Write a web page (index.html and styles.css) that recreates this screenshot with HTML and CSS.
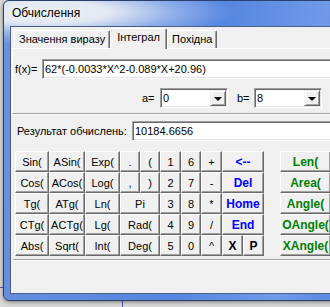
FILE: index.html
```html
<!DOCTYPE html>
<html lang="uk">
<head>
    <meta charset="UTF-8">
    <title>Обчислення</title>
    <link rel="stylesheet" href="styles.css">
</head>
<body>
    <div class="window">
        <div class="titlebar">Обчислення</div>
        <div class="client">
            <div class="tabs">
                <div class="tab">Значення виразу</div>
                <div class="tab active">Інтеграл</div>
                <div class="tab">Похідна</div>
            </div>
            <div class="panel">
                <div class="row fx-row">
                    <label class="fx-label">f(x)=</label>
                    <div class="edit">62*(-0.0033*X^2-0.089*X+20.96)</div>
                </div>
                <div class="row limits">
                    <label class="lim-label">a=</label>
                    <div class="combo"><span class="val">0</span><span class="drop"></span></div>
                    <label class="lim-label b">b=</label>
                    <div class="combo"><span class="val">8</span><span class="drop"></span></div>
                </div>
            </div>

            <div class="row result-row">
                <label class="res-label">Результат обчислень:</label>
                <div class="edit">10184.6656</div>
            </div>

            <div class="keypad">
                <div class="keys">
                    <button class="key">Sin(</button>
                    <button class="key">ASin(</button>
                    <button class="key">Exp(</button>
                    <button class="key">.</button>
                    <button class="key">(</button>
                    <button class="key">1</button>
                    <button class="key">6</button>
                    <button class="key">+</button>
                    <button class="key cmd wide">&lt;--</button>

                    <button class="key">Cos(</button>
                    <button class="key">ACos(</button>
                    <button class="key">Log(</button>
                    <button class="key">,</button>
                    <button class="key">)</button>
                    <button class="key">2</button>
                    <button class="key">7</button>
                    <button class="key">-</button>
                    <button class="key cmd wide">Del</button>

                    <button class="key">Tg(</button>
                    <button class="key">ATg(</button>
                    <button class="key">Ln(</button>
                    <button class="key wide">Pi</button>
                    <button class="key">3</button>
                    <button class="key">8</button>
                    <button class="key">*</button>
                    <button class="key cmd wide">Home</button>

                    <button class="key">CTg(</button>
                    <button class="key">ACTg(</button>
                    <button class="key">Lg(</button>
                    <button class="key wide">Rad(</button>
                    <button class="key">4</button>
                    <button class="key">9</button>
                    <button class="key">/</button>
                    <button class="key cmd wide">End</button>

                    <button class="key">Abs(</button>
                    <button class="key">Sqrt(</button>
                    <button class="key">Int(</button>
                    <button class="key wide">Deg(</button>
                    <button class="key">5</button>
                    <button class="key">0</button>
                    <button class="key">^</button>
                    <button class="key bold">X</button>
                    <button class="key bold">P</button>
                </div>
                <div class="shapes">
                    <button class="key geo">Len(</button>
                    <button class="key geo">Area(</button>
                    <button class="key geo">Angle(</button>
                    <button class="key geo">OAngle(</button>
                    <button class="key geo">XAngle(</button>
                </div>
            </div>
            <div class="sep"></div>
        </div>
    </div>
</body>
</html>
```

FILE: styles.css
```css
* { box-sizing: border-box; }
html, body { margin: 0; }
body {
    width: 330px;
    height: 307px;
    overflow: hidden;
    padding-left: 3px;
    font-family: 'Liberation Sans', Arial, sans-serif;
    font-size: 11px;
    color: #000;
    background:
        linear-gradient(#5858a8, #5858a8) 122px 301px / 1px 6px no-repeat,
        linear-gradient(#5858a8, #5858a8) 0 287px / 3px 1px no-repeat,
        #dadada;
}

/* window frame */
.window {
    width: 345px;
    height: 301px;
    border: 1px solid #2b3f6b;
    border-radius: 6px;
    padding: 0 6px 6px 6px;
    background:
        radial-gradient(190px 32px at 40px 11px, #eceff4 0%, #e2e8f2 35%, rgba(160, 188, 238, .7) 70%, rgba(120, 160, 230, 0) 100%),
        linear-gradient(100deg, #6a92dc 0, #5585e0 55%, #6f9ae8 82%, #5585e0 100%);
    box-shadow: 0 1px 4px rgba(0, 0, 0, .45);
}
.titlebar {
    height: 25px;
    line-height: 25px;
    padding-left: 2px;
    font-size: 12px;
    text-shadow: 0 0 6px #fff;
}
.client {
    height: 268px;
    border: 1px solid #4b5f86;
    background: #f0f0f0;
}

/* tabs */
.tabs {
    display: flex;
    align-items: flex-end;
    height: 21px;
    padding-left: 3px;
}
.tab {
    height: 18px;
    line-height: 17px;
    padding: 0 4px;
    border: 1px solid;
    border-bottom: none;
    border-color: #fff #696969 transparent #fff;
    border-radius: 2px 2px 0 0;
    box-shadow: inset -1px 0 #a0a0a0;
    white-space: nowrap;
}
.tab.active {
    height: 21px;
    line-height: 17px;
    padding: 0 6px 3px;
    margin-bottom: -1px;
    background: #f0f0f0;
    position: relative;
    z-index: 1;
}
.panel {
    margin-left: 1px;
    height: 66px;
    border-top: 1px solid #fff;
    border-left: 1px solid #fff;
    border-bottom: 1px solid #a0a0a0;
    box-shadow: 0 1px #fff;
}

.row { display: flex; align-items: center; }
.fx-row { margin-top: 10px; padding-left: 2px; }
.fx-label { width: 27px; }
.limits { margin-top: 9px; padding-left: 129px; }
.lim-label { width: 18px; }
.lim-label.b { width: 17px; margin-left: 9px; }

.edit, .combo {
    height: 20px;
    line-height: 18px;
    background: #fff;
    border: 1px solid;
    border-color: #a0a0a0 #fff #fff #a0a0a0;
    box-shadow: inset 1px 1px #696969, inset -1px -1px #e3e3e3;
    white-space: nowrap;
}
.edit { flex: 1; padding-left: 2px; }

.combo {
    width: 68px;
    display: flex;
    justify-content: space-between;
    padding: 1px 1px 1px 2px;
    line-height: 16px;
}
.drop {
    width: 16px;
    height: 16px;
    background: #f0f0f0;
    border: 1px solid;
    border-color: #f0f0f0 #696969 #696969 #f0f0f0;
    box-shadow: inset 1px 1px #fff, inset -1px -1px #a0a0a0;
    position: relative;
}
.drop::after {
    content: "";
    position: absolute;
    left: 3px;
    top: 6px;
    border-left: 4px solid transparent;
    border-right: 4px solid transparent;
    border-top: 4px solid #000;
}

.result-row { margin-top: 7px; padding-left: 6px; }
.res-label { width: 115px; }

/* keypad */
.keypad {
    display: flex;
    margin-top: 10px;
    padding-left: 4px;
}
.keys {
    display: grid;
    grid-template-columns: 34px 36px 35px 20px 20px 21px 20px 21px 21px 21px;
    grid-auto-rows: 21px;
}
.key {
    font-family: inherit;
    font-size: 11px;
    color: #000;
    padding: 0;
    margin: 0;
    background: #f0f0f0;
    border: 1px solid;
    border-color: #fff #696969 #696969 #fff;
    box-shadow: inset -1px -1px #a0a0a0;
    line-height: 18px;
    text-align: center;
    white-space: nowrap;
    overflow: hidden;
}
.key.wide { grid-column: span 2; }
.key.cmd { color: #0000ff; font-weight: bold; font-size: 12px; }
.key.bold { font-weight: bold; font-size: 12px; }
.shapes {
    display: flex;
    flex-direction: column;
    margin-left: 16px;
}
.key.geo {
    width: 51px;
    height: 21px;
    color: #008000;
    font-weight: bold;
    font-size: 12px;
}

.sep {
    margin: 3px 0 0 2px;
    border-top: 1px solid #a0a0a0;
    border-bottom: 1px solid #fff;
}
```
